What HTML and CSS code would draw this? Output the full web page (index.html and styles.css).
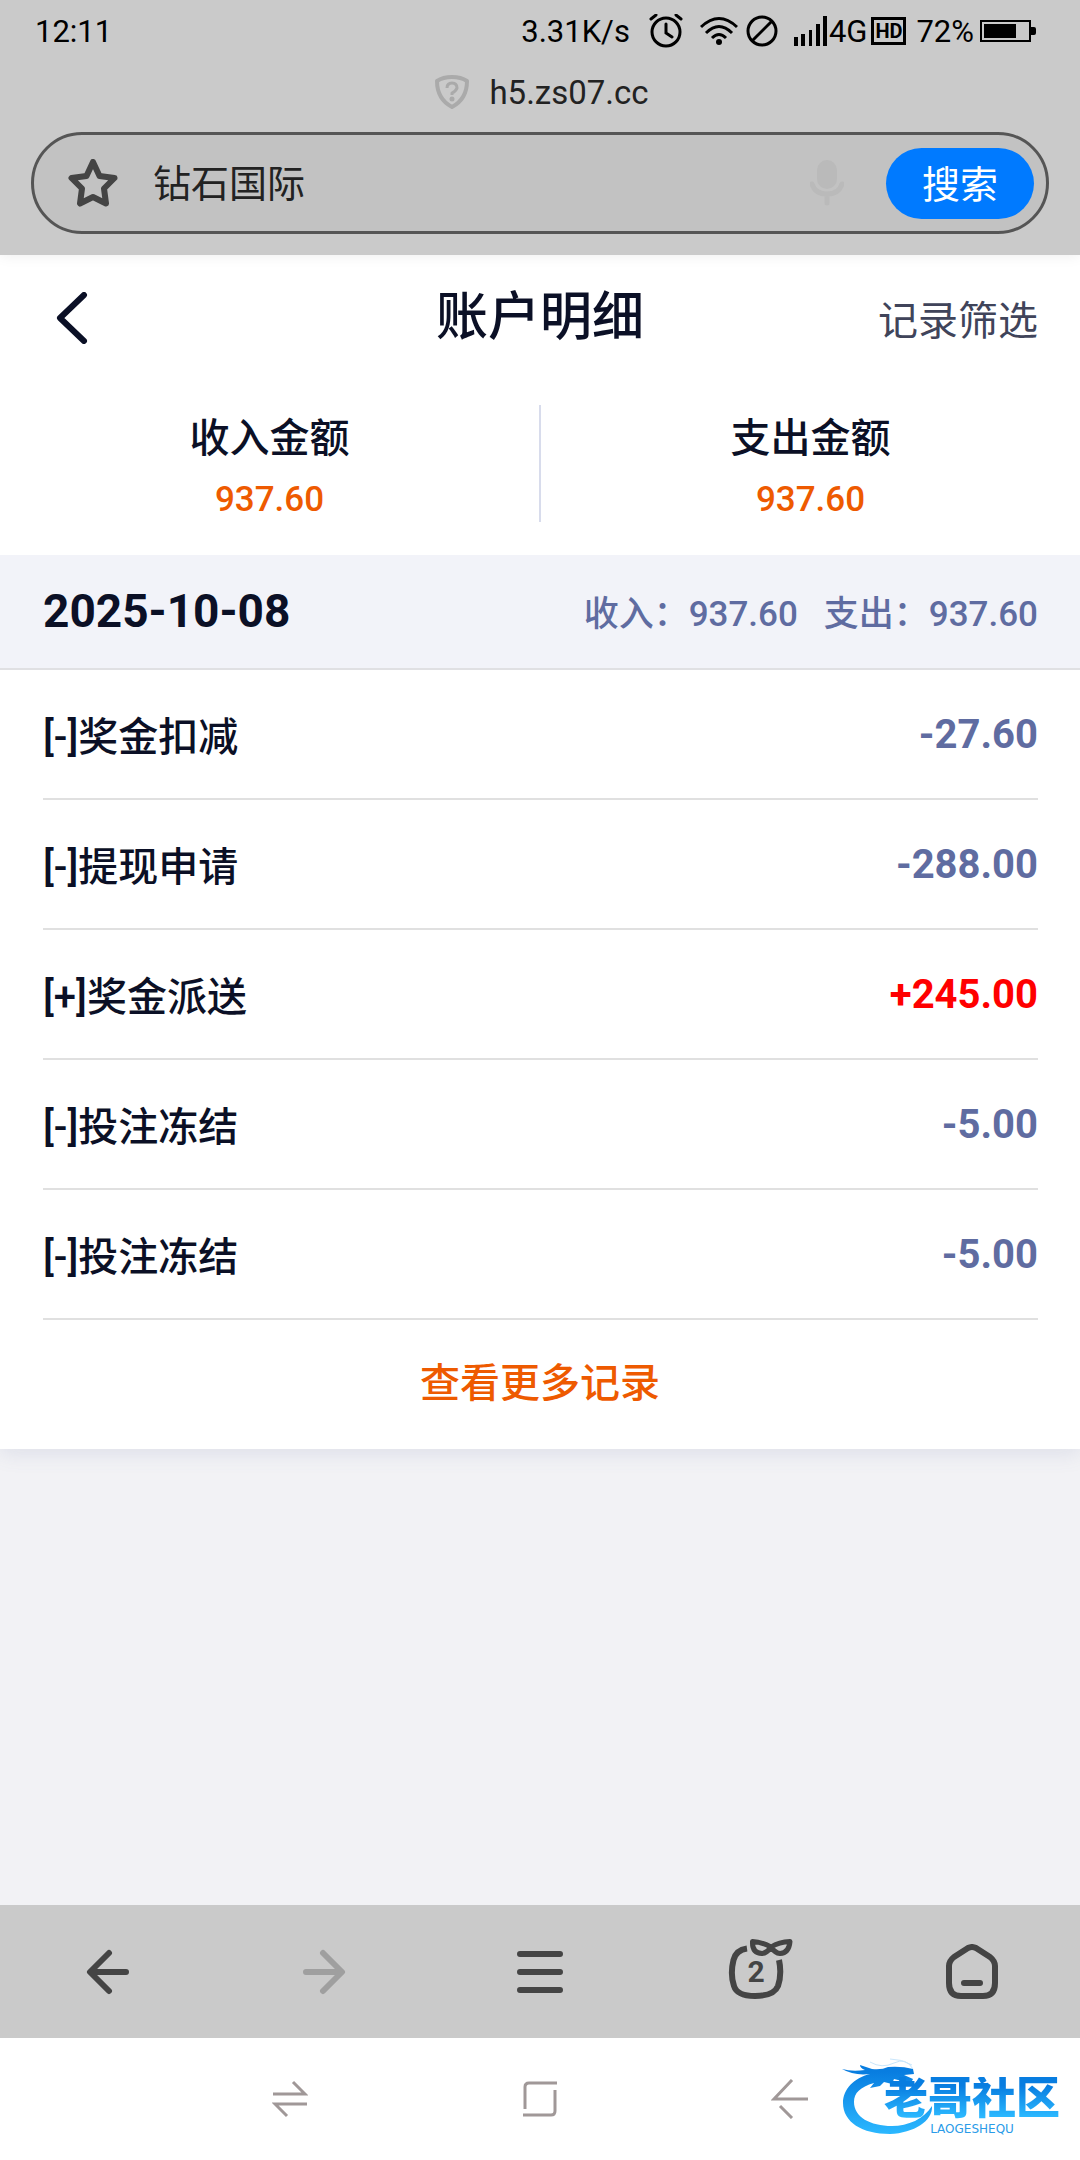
FILE: index.html
```html
<!DOCTYPE html>
<html lang="zh-CN">

<head>
	<meta charset="UTF-8" />
	<meta name="viewport" content="width=device-width, initial-scale=1.0" />
	<title>账户明细</title>
	<link rel="stylesheet" href="styles.css">
</head>

<body>
	<!-- browser top -->
	<div class="browser-top">
		<div class="status">
			<span>12:11</span>
			<div class="status-right">
				<span>3.31K/s</span>
				<svg class="alarm" width="34" height="34" viewBox="0 0 34 34" fill="none" stroke="#000" stroke-width="3" stroke-linecap="round">
					<ellipse cx="17" cy="18" rx="14" ry="14" />
					<path d="M17 10v9l6 4M2 5l5-4M32 5l-5-4" />
				</svg>
				<svg class="wifi" width="38" height="30" viewBox="0 0 38 30" fill="none" stroke="#000" stroke-width="3">
					<path d="M1 11Q19-6 37 11M6 17Q19 4 32 17M12 22Q19 15 26 22" />
					<circle cx="19" cy="26" r="3" fill="#000" stroke="none" />
				</svg>
				<svg class="mute" width="32" height="32" viewBox="0 0 32 32" fill="none" stroke="#000" stroke-width="3">
					<circle cx="16" cy="16" r="14" />
					<path d="M6 26L26 6" />
				</svg>
				<svg class="signal" width="33" height="30" viewBox="0 0 33 30">
					<path d="M0 21h4v9h-4zM7 18h4v12h-4zM15 14h3v16h-3zM22 8h4v22h-4zM29 0h4v30h-4z" />
				</svg>
				<span>4G</span>
				<span class="hd">HD</span>
				<span class="percent">72%</span>
				<svg class="battery" width="56" height="22" viewBox="0 0 56 22">
					<rect x="1" y="1" width="49" height="20" fill="none" stroke="#000" stroke-width="2" />
					<path d="M4 4h32v14H4zM51 7h3q2 0 2 2v4q0 2-2 2h-3z" />
				</svg>
			</div>
		</div>

		<div class="site">
			<svg width="34" height="34" viewBox="0 0 34 34" fill="none" stroke="#aaa" stroke-width="4" stroke-linejoin="round">
				<path d="M17 2Q26 2 32 6Q32 24 17 32Q2 24 2 6Q8 2 17 2z" />
				<path d="M12 13Q12 8 17 8T22 13Q21 16 17 18v2" stroke-width="3" />
				<circle cx="17" cy="24" r="2.5" fill="#aaa" stroke="none" />
			</svg>
			<span>h5.zs07.cc</span>
		</div>

		<form class="search">
			<svg class="star" width="50" height="48" viewBox="0 0 50 48" fill="none" stroke="#444" stroke-width="6" stroke-linejoin="round">
				<path d="M25 3L31.500 17L46.500 19L36 29.500L38 44.500L25 38L12 44.500L14 29.500L3.500 19L18.500 17z" />
			</svg>
			<input type="text" aria-label="搜索" value="钻石国际">
			<svg class="mic" width="34" height="46" viewBox="0 0 34 46" fill="none" stroke="#bababa" stroke-width="5">
				<rect x="7" y="0" width="20" height="29" rx="10" fill="#bababa" stroke="none" />
				<path d="M2 24Q5 34 17 34T32 24M17 34v9" stroke-linecap="round" />
			</svg>
			<button type="button">搜索</button>
		</form>
	</div>

	<!-- page -->
	<main>
		<div class="card">
			<header>
				<button type="button" class="back" aria-label="返回">
					<svg width="32" height="52" viewBox="0 0 32 52" fill="none" stroke="#0b1026" stroke-width="6" stroke-linecap="round" stroke-linejoin="round">
						<path d="M28 3L4 26L28 49" />
					</svg>
				</button>
				<h1>账户明细</h1>
				<a href="#">记录筛选</a>
			</header>

			<div class="totals">
				<div class="total">
					<h2>收入金额</h2>
					<p>937.60</p>
				</div>
				<div class="total">
					<h2>支出金额</h2>
					<p>937.60</p>
				</div>
			</div>

			<div class="day">
				<h3>2025-10-08</h3>
				<div class="day-sum">
					<span>收入：937.60</span>
					<span>支出：937.60</span>
				</div>
			</div>

			<ul class="records">
				<li><span>[-]奖金扣减</span><b>-27.60</b></li>
				<li><span>[-]提现申请</span><b>-288.00</b></li>
				<li><span>[+]奖金派送</span><b class="plus">+245.00</b></li>
				<li><span>[-]投注冻结</span><b>-5.00</b></li>
				<li><span>[-]投注冻结</span><b>-5.00</b></li>
			</ul>
			<a class="more" href="#">查看更多记录</a>
		</div>
	</main>

	<!-- browser toolbar -->
	<nav class="toolbar">
		<button type="button" aria-label="后退">
			<svg width="44" height="46" viewBox="0 0 44 46">
				<path d="M23 4L4 23L23 42M5 23H40" />
			</svg>
		</button>
		<button type="button" class="off" aria-label="前进">
			<svg width="44" height="46" viewBox="0 0 44 46">
				<path d="M21 4L40 23L21 42M39 23H4" />
			</svg>
		</button>
		<button type="button" aria-label="菜单">
			<svg width="46" height="46" viewBox="0 0 46 46">
				<path d="M3 5H43M3 23H43M3 41H43" />
			</svg>
		</button>
		<button type="button" aria-label="窗口">
			<svg width="74" height="66" viewBox="-10 0 74 66">
				<path d="M18 9.500Q7 11 4.500 21Q1 35 5 47Q8 57 26 57Q45 57 49 47Q53 35 50 21" stroke-linecap="butt" />
				<path d="M42 8Q33 3 23.500 2.500Q23 14 33 14.500Q38 14 42 8Q50 3 61 2.500Q60 14 51 14.500Q46 14 42 8z" stroke-width="5" />
			</svg>
			<span class="count">2</span>
		</button>
		<button type="button" aria-label="主页">
			<svg width="54" height="56" viewBox="0 0 54 56">
				<path d="M23 4Q27 2 31 4L45 13Q50 17 50 22V39Q50 52 38 52H16Q4 52 4 39V22Q4 17 9 13zM19 39H35" />
			</svg>
		</button>
	</nav>

	<!-- system navigation -->
	<nav class="system">
		<button type="button" aria-label="切换">
			<svg width="36" height="38" viewBox="0 0 36 38">
				<path d="M1 14H33L21 2M35 24H3L15 36" />
			</svg>
		</button>
		<button type="button" aria-label="桌面">
			<svg width="36" height="38" viewBox="0 0 36 38">
				<path d="M35 3H7Q3 3 3 7V29M1 35H29Q33 35 33 31V10" />
			</svg>
		</button>
		<button type="button" aria-label="返回">
			<svg width="38" height="40" viewBox="0 0 38 40">
				<path d="M21 1L3 20H37M9 27L21 39" />
			</svg>
		</button>
		<div class="logo">
			<svg width="92" height="78" viewBox="0 0 92 78">
				<defs>
					<linearGradient id="blue" x1="0" y1="0" x2="0" y2="1">
						<stop offset="0.100" stop-color="#087de0" />
						<stop offset="1" stop-color="#2bb8ff" />
					</linearGradient>
				</defs>
				<path fill="url(#blue)" d="M0 12Q10 15 23 13Q18 11 18 8L30 12Q40 13 46 10Q60 9 71 12L72 17L62 18L71 22L69 26L60 24L52 22L50 27L42 25L38 29L28 31L32 26C18 30 12 36 12 45C12 60 28 69 50 69C66 69 82 62 90 49C91 64 72 76 48 77C20 77 1 65 1 46C1 32 12 21 28 17Q12 19 0 12z" />
				<path fill="none" stroke="#c9e6fb" stroke-width="1" d="M28 5Q40 12 52 6T71 12M48 2Q60 2 70 8" />
			</svg>
			<div class="logo-text">
				<strong>老哥社区</strong>
				<small>LAOGESHEQU</small>
			</div>
		</div>
	</nav>
</body>

</html>
```
FILE: styles.css
```css
* {
	box-sizing: border-box;
}

body {
	display: flex;
	flex-direction: column;
	min-height: 100vh;
	margin: 0;
	background-color: #f2f2f5;
	color: #0b1026;
	font-family: Roboto, "Noto Sans CJK SC", sans-serif;
	font-size: 40px;
}

h1, h2, h3, p, ul {
	margin: 0;
	padding: 0;
	font-weight: 500;
}

svg {
	display: block;
	flex-shrink: 0;
}

button {
	padding: 0;
	border: none;
	background: none;
	font-family: inherit;
	cursor: pointer;
}

a {
	text-decoration: none;
}

/* browser top */
.browser-top {
	position: relative;
	padding-bottom: 21px;
	background-color: #cacaca;
	box-shadow: 0 0 14px rgba(0, 0, 0, 0.08);
}

.status {
	display: flex;
	justify-content: space-between;
	align-items: center;
	height: 62px;
	padding: 0 44px 0 35px;
	color: #000;
	font-size: 31px;
}

.status-right {
	display: flex;
	align-items: center;
}

.alarm {
	margin-left: 19px;
}

.wifi {
	margin-left: 17px;
}

.mute {
	margin-left: 8px;
}

.signal {
	margin: 0 2px 0 16px;
}

.hd {
	width: 35px;
	height: 28px;
	margin-left: 4px;
	border: 3px solid #000;
	font-size: 20px;
	font-weight: 700;
	line-height: 22px;
	text-align: center;
}

.percent {
	margin: 0 6px 0 10px;
}

.site {
	display: flex;
	justify-content: center;
	align-items: center;
	gap: 20px;
	height: 60px;
	padding-left: 4px;
	color: #222;
	font-size: 33px;
}

.search {
	display: flex;
	align-items: center;
	height: 102px;
	margin: 10px 31px 0;
	padding: 0 12px 0 34px;
	border: 3px solid #555;
	border-radius: 51px;
	background-color: #c2c2c2;
}

.search input {
	flex: 1;
	min-width: 0;
	margin-left: 35px;
	padding: 0 0 6px;
	border: none;
	outline: none;
	background: none;
	color: #222;
	font-family: inherit;
	font-size: 38px;
}

.search button {
	width: 148px;
	height: 71px;
	margin-left: 42px;
	padding-bottom: 4px;
	border-radius: 36px;
	background-color: #007aff;
	color: #fff;
	font-size: 38px;
}

/* page */
main {
	flex: 1;
}

.card {
	background-color: #fff;
	box-shadow: 0 4px 20px rgba(95, 108, 161, 0.14);
}

header {
	display: grid;
	grid-template-columns: 1fr auto 1fr;
	align-items: center;
	height: 126px;
	padding: 0 42px;
}

header h1 {
	font-size: 52px;
	line-height: 60px;
}

header a {
	justify-self: end;
	color: #40445a;
}

.back {
	justify-self: start;
	margin-left: 14px;
}

.totals {
	display: flex;
	padding: 24px 0 33px;
}

.total {
	flex: 1;
	height: 117px;
	padding-top: 6px;
	text-align: center;
}

.total:first-child {
	border-right: 2px solid #d8dcec;
}

.total h2 {
	font-size: 40px;
	line-height: 56px;
}

.total p {
	margin-top: 8px;
	color: #ee5a00;
	font-size: 35px;
	line-height: 50px;
}

.day {
	display: flex;
	justify-content: space-between;
	align-items: center;
	height: 115px;
	padding: 0 42px 2px 43px;
	border-bottom: 2px solid #e0e0e3;
	background-color: #f2f3f9;
}

.day h3 {
	font-size: 46px;
	font-weight: 700;
}

.day-sum {
	display: flex;
	gap: 26px;
	color: #5f6ca1;
	font-size: 35px;
	font-weight: 500;
}

.records {
	padding: 0 42px 0 43px;
	list-style: none;
}

.records li {
	display: flex;
	justify-content: space-between;
	align-items: center;
	height: 130px;
	border-bottom: 2px solid #e0e0e0;
	font-weight: 500;
}

.records b {
	color: #5f6ca1;
	font-weight: 700;
}

.records .plus {
	color: #ff0000;
}

.more {
	display: block;
	padding-bottom: 2px;
	color: #ee5a00;
	font-weight: 500;
	line-height: 127px;
	text-align: center;
}

/* browser toolbar */
.toolbar {
	display: grid;
	grid-template-columns: repeat(5, 1fr);
	height: 133px;
	background-color: #cacaca;
}

.toolbar button {
	display: flex;
	position: relative;
	justify-content: center;
	align-items: center;
}

.toolbar svg {
	fill: none;
	stroke: #444;
	stroke-width: 6;
	stroke-linecap: round;
	stroke-linejoin: round;
}

.toolbar .off svg {
	stroke: #9f9f9f;
}

.count {
	position: absolute;
	inset: 0;
	color: #444;
	font-size: 30px;
	font-weight: 700;
	line-height: 133px;
}

/* system navigation */
.system {
	display: flex;
	position: relative;
	justify-content: center;
	height: 122px;
	background-color: #fff;
}

.system button {
	display: flex;
	justify-content: center;
	align-items: center;
	width: 250px;
}

.system button svg {
	fill: none;
	stroke: #a09898;
	stroke-width: 3;
}

.logo {
	position: absolute;
	top: 19px;
	right: 16px;
	width: 222px;
}

.logo-text {
	position: absolute;
	top: 20px;
	left: 42px;
}

.logo strong,
.logo small {
	display: block;
	text-align: center;
}

.logo strong {
	background: linear-gradient(#087de0 20%, #2bb8ff 90%);
	-webkit-background-clip: text;
	background-clip: text;
	color: transparent;
	font-size: 44px;
	font-weight: 900;
	line-height: 44px;
}

.logo small {
	color: #2a9be8;
	font-family: "DejaVu Sans", sans-serif;
	font-size: 12px;
	line-height: 16px;
}
```
